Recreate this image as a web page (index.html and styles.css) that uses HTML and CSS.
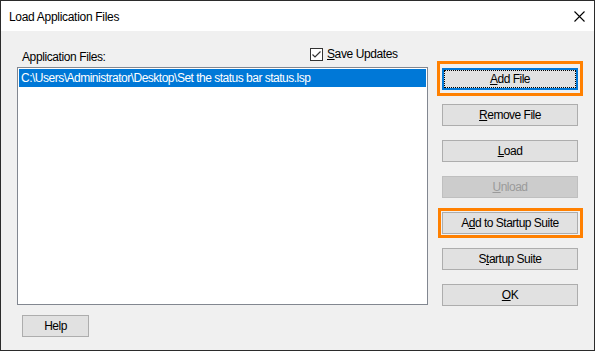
FILE: index.html
```html
<!DOCTYPE html>
<html lang="en">
<head>
<meta charset="UTF-8">
<title>Load Application Files</title>
<link rel="stylesheet" href="styles.css">
</head>
<body>

<div class="window">
    <div class="titlebar">
        <span class="title">Load Application Files</span>
        <svg class="close" width="11" height="11" viewBox="0 0 11 11">
            <path d="M0.5 0.5L10.5 10.5M10.5 0.5L0.5 10.5" stroke="#000" stroke-width="1.1" fill="none"/>
        </svg>
    </div>

    <div class="main">
        <div class="left">
            <div class="head">
                <span class="label">Application Files:</span>
                <label class="check">
                    <svg width="13" height="13" viewBox="0 0 13 13">
                        <rect x="0.5" y="0.5" width="12" height="12" fill="#fff" stroke="#333"/>
                        <path d="M2.5 6.5L5 9L10.5 3.5" fill="none" stroke="#333" stroke-width="1.2"/>
                    </svg>
                    <span><u>S</u>ave Updates</span>
                </label>
            </div>
            <div class="list">
                <div class="item selected">C:\Users\Administrator\Desktop\Set the status bar status.lsp</div>
            </div>
            <button class="btn help">Help</button>
        </div>

        <div class="right">
            <button class="btn default mark-a"><u>A</u>dd File</button>
            <button class="btn"><u>R</u>emove File</button>
            <button class="btn"><u>L</u>oad</button>
            <button class="btn" disabled><u>U</u>nload</button>
            <button class="btn mark-b">A<u>d</u>d to Startup Suite</button>
            <button class="btn">S<u>t</u>artup Suite</button>
            <button class="btn"><u>O</u>K</button>
        </div>
    </div>
</div>

</body>
</html>
```

FILE: styles.css
```css
body {
    margin: 0;
    font-family: "Liberation Sans", Arial, sans-serif;
    font-size: 12px;
    color: #000;
}
.window {
    width: 595px;
    height: 351px;
    box-sizing: border-box;
    border: 1px solid #2b2b2b;
    background: #f0f0f0;
    display: flex;
    flex-direction: column;
}
.titlebar {
    height: 30px;
    flex: none;
    background: #fff;
    display: flex;
    align-items: center;
    justify-content: space-between;
    padding: 0 9px 0 8px;
}
.title { letter-spacing: -0.3px; margin-top: 1px; }
.close { display: block; }

.main { flex: 1; display: flex; }
.left {
    width: 411px;
    margin-left: 16px;
    display: flex;
    flex-direction: column;
}
.head {
    height: 36px;
    display: flex;
    align-items: flex-end;
    letter-spacing: -0.4px;
    line-height: 14px;
}
.label { width: 288px; padding-left: 5px; margin-bottom: 3px; }
.check {
    display: flex;
    align-items: center;
    gap: 4px;
    margin-bottom: 6px;
}
.check svg { display: block; }
.list {
    height: 238px;
    box-sizing: border-box;
    border: 1px solid #828790;
    background: #fff;
    padding: 1px;
}
.item {
    height: 18px;
    line-height: 18px;
    padding-left: 2px;
    letter-spacing: -0.5px;
    white-space: nowrap;
}
.item.selected { background: #0078d7; color: #fff; }

.right {
    width: 136px;
    margin-left: 14px;
    padding-top: 37px;
    display: flex;
    flex-direction: column;
    gap: 14px;
}
.btn {
    position: relative;
    box-sizing: border-box;
    height: 22px;
    padding: 0;
    background: #e1e1e1;
    border: 1px solid #adadad;
    font: inherit;
    letter-spacing: -0.5px;
    color: #000;
}
.btn:disabled { background: #cccccc; border-color: #bfbfbf; color: #9a9a9a; }
.help { width: 67px; margin: 10px 0 0 5px; }

.default {
    border-color: #0078d7;
    box-shadow: inset 0 0 0 1px #0078d7;
}
.default::after {
    content: "";
    position: absolute;
    inset: 1px;
    border: 1px dotted #000;
}
.mark-a::before, .mark-b::before {
    content: "";
    position: absolute;
    border: 3px solid #ff8000;
}
.mark-a::before { left: -6px; right: -6px; top: -8px; bottom: -7px; }
.mark-b::before { left: -5px; right: -6px; top: -5px; bottom: -5px; }
```
